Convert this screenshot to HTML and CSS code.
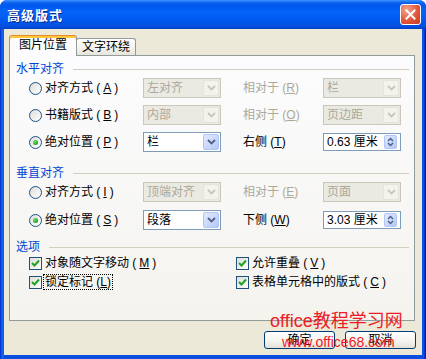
FILE: index.html
```html
<!DOCTYPE html>
<html>
<head>
  <meta charset="utf-8">
  <title>高级版式</title>
  <link rel="stylesheet" href="styles.css">
</head>
<body>
  <div class="window">
    <div class="titlebar">
      <span class="title">高级版式</span>
      <span class="close-btn">
        <svg width="11" height="11" viewBox="0 0 11 11"><path d="M1.5 1.5 L9.5 9.5 M9.5 1.5 L1.5 9.5" stroke="#fff" stroke-width="2" stroke-linecap="square"/></svg>
      </span>
    </div>

    <div class="client">
      <div class="tabs">
        <div class="tab active">图片位置</div>
        <div class="tab">文字环绕</div>
      </div>

      <div class="panel">
        <div class="group-title">水平对齐</div>
        <div class="pos-grid">
          <div class="radio-row"><span class="radio"></span>对齐方式 (<u>A</u>)</div>
          <div class="combo disabled"><span class="combo-text">左对齐</span><span class="drop"><svg width="9" height="6" viewBox="0 0 9 6"><path d="M1 1 L4.5 4.5 L8 1" fill="none" stroke-width="1.8"/></svg></span></div>
          <span class="side-label disabled-text">相对于 (<u>R</u>)</span>
          <div class="combo disabled"><span class="combo-text">栏</span><span class="drop"><svg width="9" height="6" viewBox="0 0 9 6"><path d="M1 1 L4.5 4.5 L8 1" fill="none" stroke-width="1.8"/></svg></span></div>

          <div class="radio-row"><span class="radio"></span>书籍版式 (<u>B</u>)</div>
          <div class="combo disabled"><span class="combo-text">内部</span><span class="drop"><svg width="9" height="6" viewBox="0 0 9 6"><path d="M1 1 L4.5 4.5 L8 1" fill="none" stroke-width="1.8"/></svg></span></div>
          <span class="side-label disabled-text">相对于 (<u>O</u>)</span>
          <div class="combo disabled"><span class="combo-text">页边距</span><span class="drop"><svg width="9" height="6" viewBox="0 0 9 6"><path d="M1 1 L4.5 4.5 L8 1" fill="none" stroke-width="1.8"/></svg></span></div>

          <div class="radio-row"><span class="radio checked"></span>绝对位置 (<u>P</u>)</div>
          <div class="combo"><span class="combo-text">栏</span><span class="drop"><svg width="9" height="6" viewBox="0 0 9 6"><path d="M1 1 L4.5 4.5 L8 1" fill="none" stroke-width="1.8"/></svg></span></div>
          <span class="side-label">右侧 (<u>T</u>)</span>
          <div class="spin"><span class="combo-text">0.63 厘米</span><span class="spin-btn"><svg width="7" height="10" viewBox="0 0 7 10"><path d="M1 4 L3.5 1.5 L6 4 M1 6 L3.5 8.5 L6 6" fill="none" stroke-width="1.5"/></svg></span></div>
        </div>

        <div class="group-title gap-top">垂直对齐</div>
        <div class="pos-grid vertical">
          <div class="radio-row"><span class="radio"></span>对齐方式 (<u>I</u>)</div>
          <div class="combo disabled"><span class="combo-text">顶端对齐</span><span class="drop"><svg width="9" height="6" viewBox="0 0 9 6"><path d="M1 1 L4.5 4.5 L8 1" fill="none" stroke-width="1.8"/></svg></span></div>
          <span class="side-label disabled-text">相对于 (<u>E</u>)</span>
          <div class="combo disabled"><span class="combo-text">页面</span><span class="drop"><svg width="9" height="6" viewBox="0 0 9 6"><path d="M1 1 L4.5 4.5 L8 1" fill="none" stroke-width="1.8"/></svg></span></div>

          <div class="radio-row"><span class="radio checked"></span>绝对位置 (<u>S</u>)</div>
          <div class="combo"><span class="combo-text">段落</span><span class="drop"><svg width="9" height="6" viewBox="0 0 9 6"><path d="M1 1 L4.5 4.5 L8 1" fill="none" stroke-width="1.8"/></svg></span></div>
          <span class="side-label">下侧 (<u>W</u>)</span>
          <div class="spin"><span class="combo-text">3.03 厘米</span><span class="spin-btn"><svg width="7" height="10" viewBox="0 0 7 10"><path d="M1 4 L3.5 1.5 L6 4 M1 6 L3.5 8.5 L6 6" fill="none" stroke-width="1.5"/></svg></span></div>
        </div>

        <div class="group-title options-title">选项</div>
        <div class="options">
          <div class="check-row"><span class="check"><svg width="11" height="11" viewBox="0 0 11 11"><path d="M2 5 L4.5 7.5 L9 2.5" fill="none" stroke-width="2"/></svg></span>对象随文字移动 (<u>M</u>)</div>
          <div class="check-row"><span class="check"><svg width="11" height="11" viewBox="0 0 11 11"><path d="M2 5 L4.5 7.5 L9 2.5" fill="none" stroke-width="2"/></svg></span>允许重叠 (<u>V</u>)</div>
          <div class="check-row"><span class="check"><svg width="11" height="11" viewBox="0 0 11 11"><path d="M2 5 L4.5 7.5 L9 2.5" fill="none" stroke-width="2"/></svg></span><span class="focus">锁定标记 (<u>L</u>)</span></div>
          <div class="check-row"><span class="check"><svg width="11" height="11" viewBox="0 0 11 11"><path d="M2 5 L4.5 7.5 L9 2.5" fill="none" stroke-width="2"/></svg></span>表格单元格中的版式 (<u>C</u>)</div>
        </div>
      </div>

      <div class="buttons">
        <button class="btn">确定</button>
        <button class="btn">取消</button>
      </div>
    </div>

    <div class="watermark">
      <div class="wm-big">office教程学习网</div>
      <div class="wm-small">www.office68.com</div>
    </div>
  </div>
</body>
</html>
```

FILE: styles.css
```css
* {
  box-sizing: border-box;
}

body {
  margin: 0;
  font-family: "Liberation Sans", "Noto Sans CJK SC", sans-serif;
  font-size: 12px;
  color: #000;
  background: #fff;
}

.window {
  position: relative;
  width: 426px;
  height: 359px;
  display: flex;
  flex-direction: column;
  background: linear-gradient(to right, #0019cf 0, #0855dd 1px, #166aee 3px, #0a4fe0 4px, #0a4fe0 422px, #0855dd 424px, #0019cf 425px);
  border-radius: 7px 7px 0 0;
  overflow: hidden;
}

/* title bar */
.titlebar {
  height: 29px;
  display: flex;
  align-items: center;
  justify-content: space-between;
  padding: 0 5px 0 7px;
  background: linear-gradient(#3d95ff 0, #0a5fee 3px, #0058ee 6px, #0664fb 12px, #0058f0 20px, #0050e2 26px, #0040c4 29px);
}

.title {
  color: #fff;
  font-family: "Noto Sans CJK SC", sans-serif;
  font-weight: bold;
  font-size: 13px;
  letter-spacing: 1px;
  text-shadow: 1px 1px #0b2a8c;
}

.close-btn {
  width: 21px;
  height: 21px;
  border: 1px solid #fff;
  border-radius: 3px;
  background: radial-gradient(circle at 30% 25%, #f2a58e, #e2583c 55%, #c23a1c);
  display: flex;
  align-items: center;
  justify-content: center;
}

/* dialog body */
.client {
  flex: 1;
  margin: 0 4px 4px;
  background: #ece9d8;
  padding: 6px 7px 0 5px;
}

.tabs {
  display: flex;
  align-items: flex-end;
  height: 20px;
}

.tab {
  height: 17px;
  padding: 0 5px;
  margin-left: -1px;
  border: 1px solid #919b9c;
  border-bottom: none;
  border-radius: 3px 3px 0 0;
  background: linear-gradient(#ffffff, #f0efea 70%, #e6e4da);
  line-height: 16px;
}

.tab.active {
  position: relative;
  z-index: 2;
  margin-left: 0;
  height: 21px;
  margin-bottom: -1px;
  padding: 0 9px;
  line-height: 18px;
  background: #fcfcfe;
  border-top-color: #e68b2c;
  box-shadow: inset 0 2px 0 #ffc83c;
}

.panel {
  height: 266px;
  border: 1px solid #919b9c;
  background: linear-gradient(#fcfcfe, #f4f3ee);
  padding: 6px 5px 0 6px;
}

.group-title {
  display: flex;
  align-items: center;
  height: 14px;
  line-height: 14px;
  color: #0046d5;
}

.group-title::after {
  content: "";
  flex: 1;
  height: 1px;
  margin-left: 9px;
  background: #d0d0bf;
}

.gap-top {
  margin-top: 14px;
}

.options-title {
  margin-top: 10px;
}

.pos-grid {
  display: grid;
  grid-template-columns: 114px 78px 102px 78px;
  grid-auto-rows: 20px;
  row-gap: 7px;
  align-items: center;
  margin: 2px 0 0 13px;
}

.pos-grid.vertical {
  row-gap: 8px;
}

.radio-row {
  display: flex;
  align-items: center;
  gap: 3px;
  line-height: 14px;
  white-space: nowrap;
}

.radio {
  width: 13px;
  height: 13px;
  border-radius: 50%;
  border: 1px solid #1c5180;
  background: linear-gradient(135deg, #dcdcd7, #ffffff);
  display: flex;
  align-items: center;
  justify-content: center;
}

.radio.checked::after {
  content: "";
  width: 5px;
  height: 5px;
  border-radius: 50%;
  background: radial-gradient(circle at 35% 35%, #6ee06b, #21a121 70%);
}

.side-label {
  padding-left: 22px;
  line-height: 14px;
  white-space: nowrap;
}

.disabled-text {
  color: #aca899;
}

.combo {
  height: 20px;
  border: 1px solid #7f9db9;
  background: #fff;
  display: flex;
  align-items: center;
  padding: 0 1px 0 3px;
}

.combo-text {
  flex: 1;
  line-height: 14px;
  white-space: nowrap;
}

.drop {
  width: 16px;
  height: 16px;
  border: 1px solid #b1c6f7;
  border-radius: 2px;
  background: linear-gradient(135deg, #e2eafe, #b4c8f6);
  display: flex;
  align-items: center;
  justify-content: center;
  stroke: #4d6185;
}

.combo.disabled {
  border-color: #c9c7ba;
  background: #ebeae2;
  color: #aca899;
}

.combo.disabled .drop {
  border-color: #e5e3da;
  background: #f3f2ec;
  stroke: #c9c7ba;
}

.spin {
  height: 18px;
  border: 1px solid #7f9db9;
  background: #fff;
  display: flex;
  align-items: center;
  padding: 0 3px 0 3px;
}

.spin-btn {
  width: 13px;
  height: 14px;
  border: 1px solid #b1c6f7;
  border-radius: 2px;
  background: linear-gradient(135deg, #e2eafe, #b4c8f6);
  display: flex;
  align-items: center;
  justify-content: center;
  stroke: #4d6185;
}

/* options */
.options {
  display: grid;
  grid-template-columns: 207px auto;
  grid-auto-rows: 16px;
  row-gap: 3px;
  margin: 1px 0 0 13px;
}

.check-row {
  display: flex;
  align-items: center;
  gap: 3px;
  line-height: 14px;
  white-space: nowrap;
}

.check {
  width: 13px;
  height: 13px;
  border: 1px solid #1c5180;
  background: linear-gradient(135deg, #dcdcd7, #ffffff);
  display: flex;
  align-items: center;
  justify-content: center;
  stroke: #21a121;
}

.focus {
  margin-left: -2px;
  padding: 0 1px;
  border: 1px dotted #000;
  line-height: 14px;
}

/* buttons */
.buttons {
  display: flex;
  justify-content: flex-end;
  gap: 10px;
  margin: 10px -1px 0 0;
}

.btn {
  width: 71px;
  height: 18px;
  padding: 0;
  border: 1px solid #003c74;
  border-radius: 3px;
  background: linear-gradient(#ffffff, #f3f2ee 60%, #e3e0d5);
  font-family: inherit;
  font-size: 12px;
  line-height: 16px;
  color: #000;
}

/* watermark over the picture */
.watermark {
  position: absolute;
  left: 270px;
  top: 311px;
  color: #ee1c25;
  font-family: "Liberation Sans", "Noto Sans CJK SC", sans-serif;
}

.wm-big {
  font-size: 18px;
  line-height: 20px;
}

.wm-small {
  font-size: 14px;
  line-height: 16px;
  margin: 3px 0 0 12px;
}
```
